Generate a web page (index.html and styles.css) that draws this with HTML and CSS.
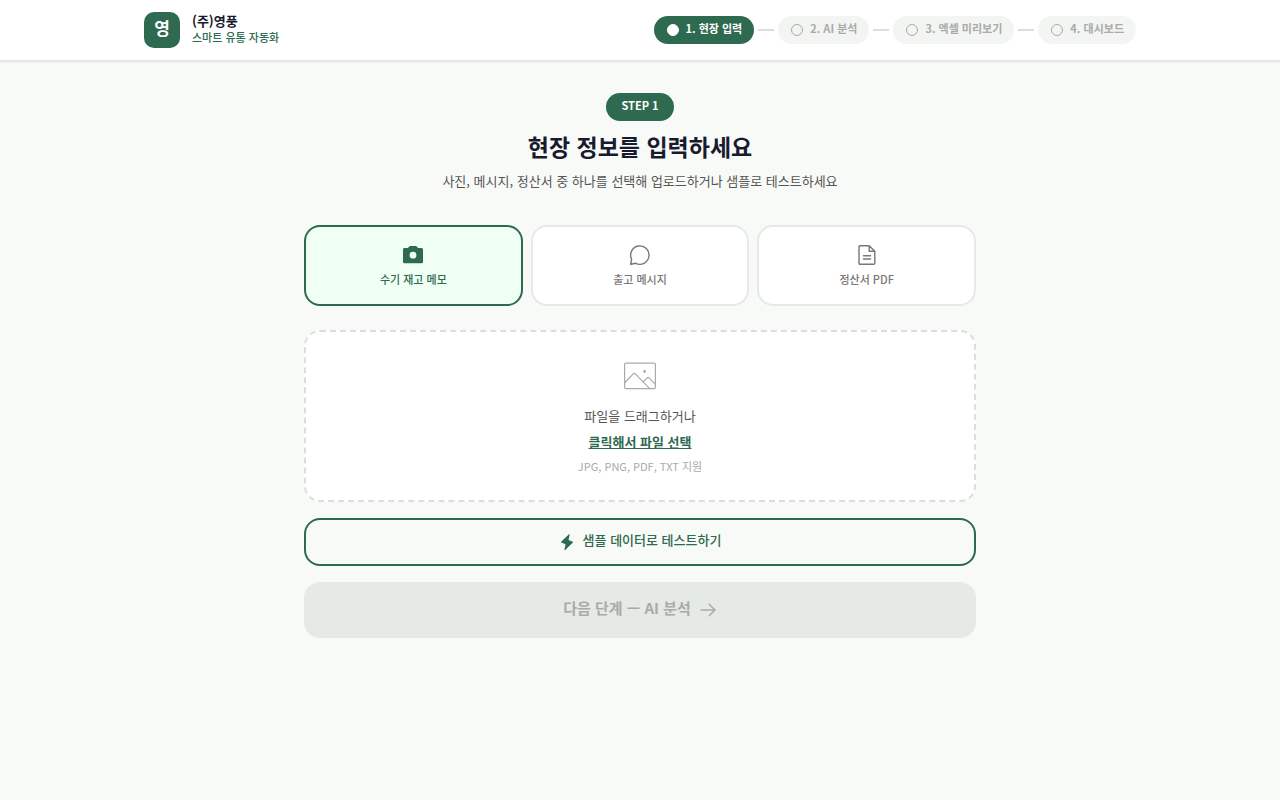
FILE: index.html
```html
<!DOCTYPE html>
<html lang="ko">
<head>
<meta charset="utf-8">
<meta name="viewport" content="width=device-width, initial-scale=1">
<title>(주)영풍 스마트 유통 자동화</title>
<link rel="stylesheet" href="styles.css">
</head>
<body>
<header class="header">
  <div class="header-inner">
    <div class="brand">
      <div class="logo">영</div>
      <div class="brand-text">
        <div class="brand-name">(주)영풍</div>
        <div class="brand-sub">스마트 유통 자동화</div>
      </div>
    </div>
    <ol class="steps">
      <li class="step active"><svg class="dot" viewBox="0 0 14 14" aria-hidden="true"><circle cx="7" cy="7" r="5.5" fill="currentColor"/></svg><span>1. 현장 입력</span></li>
      <li class="step"><svg class="dot" viewBox="0 0 14 14" aria-hidden="true"><circle cx="7" cy="7" r="5.5"/></svg><span>2. AI 분석</span></li>
      <li class="step"><svg class="dot" viewBox="0 0 14 14" aria-hidden="true"><circle cx="7" cy="7" r="5.5"/></svg><span>3. 엑셀 미리보기</span></li>
      <li class="step"><svg class="dot" viewBox="0 0 14 14" aria-hidden="true"><circle cx="7" cy="7" r="5.5"/></svg><span>4. 대시보드</span></li>
    </ol>
  </div>
</header>
<main class="main">
  <div class="intro">
    <span class="badge">STEP 1</span>
    <h1 class="title">현장 정보를 입력하세요</h1>
    <p class="desc">사진, 메시지, 정산서 중 하나를 선택해 업로드하거나 샘플로 테스트하세요</p>
  </div>
  <div class="types">
    <button type="button" class="type selected" aria-pressed="true">
      <svg class="type-icon" viewBox="0 0 22 22" aria-hidden="true"><path fill="currentColor" stroke="none" fill-rule="evenodd" d="M7.8 2h6.4l1.9 2h3.3c.9 0 1.6.7 1.6 1.6v12.1c0 .9-.7 1.6-1.6 1.6H2.6c-.9 0-1.6-.7-1.6-1.6V5.6C1 4.700 1.700 4 2.600 4h3.300zM11 7.800a3.400 3.400 0 1 0 0 6.800 3.400 3.400 0 0 0 0-6.800z"/></svg>
      <span>수기 재고 메모</span>
    </button>
    <button type="button" class="type" aria-pressed="false">
      <svg class="type-icon" viewBox="0 0 22 22" aria-hidden="true"><path d="M2.6 15.2A9.2 9.2 0 1 1 6.7 19.3L1.7 20.3z"/></svg>
      <span>출고 메시지</span>
    </button>
    <button type="button" class="type" aria-pressed="false">
      <svg class="type-icon" viewBox="0 0 22 22" aria-hidden="true"><path d="M4 1.700h9.200l5.600 5.600v12a1 1 0 0 1-1 1H4a1 1 0 0 1-1-1V2.700a1 1 0 0 1 1-1zM13.200 1.700v5.600h5.600M7.500 11.700h7M7.500 15h7"/></svg>
      <span>정산서 PDF</span>
    </button>
  </div>
  <div class="drop">
    <svg class="drop-icon" viewBox="0 0 36 36" aria-hidden="true"><rect x="2.6" y="5.2" width="30.8" height="25.4" rx="1.4"/><path d="M3 24.500l8.500-8.800c.5-.5 1.100-.5 1.600 0L27.700 30.600M21.300 23.700l3.900-3.800c.5-.5 1.200-.5 1.700 0l6.300 6.300"/><circle cx="22.600" cy="13.500" r=".8" fill="currentColor"/></svg>
    <p class="drop-text">파일을 드래그하거나</p>
    <button type="button" class="pick">클릭해서 파일 선택</button>
    <p class="formats">JPG, PNG, PDF, TXT 지원</p>
  </div>
  <button type="button" class="sample">
    <svg class="sample-icon" viewBox="0 0 18 18" aria-hidden="true"><path fill="currentColor" stroke="none" d="M12 .7 10.700 6.800l4.800 1.800c.4.200.5.600.2.900l-8.800 8.400c-.4.400-.9.100-.8-.4l1.300-6.100-4.800-1.800c-.4-.2-.5-.6-.2-.9L11.200.300c.4-.3.900 0 .8.400z"/></svg>
    <span>샘플 데이터로 테스트하기</span>
  </button>
  <button type="button" class="next" disabled>
    <span>다음 단계 — AI 분석</span>
    <svg class="next-icon" viewBox="0 0 18 18" aria-hidden="true"><path d="M2 9h14M10.200 3.200 16 9l-5.800 5.800"/></svg>
  </button>
</main>
</body>
</html>
```
FILE: styles.css
```css
* { box-sizing: border-box; }
body {
  margin: 0;
  min-height: 100vh;
  background: #f8faf8;
  color: #1a1a2e;
  font-family: "Noto Sans CJK KR", "Noto Sans", sans-serif;
}
button { font: inherit; cursor: pointer; }
h1, p, ol { margin: 0; padding: 0; }
svg {
  display: block;
  flex: none;
  fill: none;
  stroke: currentColor;
  stroke-linecap: round;
  stroke-linejoin: round;
}
.header {
  background: #fff;
  border-bottom: 1px solid #e5e8e5;
  box-shadow: 0 1px 2px rgba(0, 0, 0, 0.1);
}
.header-inner {
  display: flex;
  align-items: center;
  justify-content: space-between;
  max-width: 1024px;
  min-height: 60px;
  margin: 0 auto;
  padding: 0 16px;
}
.brand { display: flex; align-items: center; gap: 12px; }
.logo {
  width: 36px;
  height: 36px;
  border-radius: 10px;
  background: #2d6a4f;
  color: #fff;
  font-size: 17px;
  font-weight: 700;
  line-height: 32px;
  text-align: center;
}
.brand-text { padding-bottom: 2px; }
.brand-name { font-size: 13px; font-weight: 700; line-height: 16px; }
.brand-sub { color: #2d6a4f; font-size: 11px; font-weight: 500; line-height: 16px; }
.steps { display: flex; gap: 24px; list-style: none; }
.step {
  position: relative;
  display: flex;
  align-items: center;
  gap: 6px;
  padding: 4px 12px;
  border-radius: 14px;
  background: #f2f5f2;
  color: #aaa;
  font-size: 11px;
  font-weight: 700;
  line-height: 20px;
}
.step span { padding-bottom: 4px; line-height: 16px; }
.step.active { background: #2d6a4f; color: #fff; }
.step + .step::before {
  content: "";
  position: absolute;
  top: 13px;
  left: -20px;
  width: 16px;
  height: 2px;
  background: #ddd;
}
.dot { width: 14px; height: 14px; }
.main { max-width: 704px; margin: 0 auto; padding: 32px 16px; }
.intro { text-align: center; }
.badge {
  display: inline-block;
  padding: 2px 15px 6px;
  border-radius: 14px;
  background: #2d6a4f;
  color: #fff;
  font-size: 11px;
  font-weight: 700;
  line-height: 20px;
  vertical-align: top;
}
.title { margin-top: 7px; font-size: 23px; font-weight: 700; line-height: 36px; }
.desc { margin-top: 7px; color: #555; font-size: 13px; line-height: 20px; }
.types { display: grid; grid-template-columns: repeat(3, 1fr); gap: 8px; margin-top: 34px; }
.type {
  display: flex;
  flex-direction: column;
  align-items: center;
  gap: 5px;
  padding: 17px 8px 16px;
  border: 2px solid #e5eae5;
  border-radius: 16px;
  background: #fff;
  color: #777;
  font-size: 11px;
  font-weight: 500;
  line-height: 17px;
}
.type.selected { border-color: #2d6a4f; background: #f0fff4; color: #2d6a4f; }
.type-icon { width: 22px; height: 22px; stroke-width: 1.4; }
.drop {
  display: flex;
  flex-direction: column;
  align-items: center;
  margin-top: 24px;
  padding: 26px 16px 24px;
  border: 2px dashed #ddd;
  border-radius: 16px;
  background: #fff;
  text-align: center;
}
.drop-icon { width: 36px; height: 36px; color: #aaa; stroke-width: 1.2; }
.drop-text { margin-top: 12px; color: #555; font-size: 13px; line-height: 20px; }
.pick {
  margin-top: 6px;
  padding: 0;
  border: 0;
  background: none;
  color: #2d6a4f;
  font-size: 13px;
  font-weight: 700;
  line-height: 20px;
  text-decoration: underline;
}
.formats { margin-top: 4px; color: #aaa; font-size: 11px; line-height: 20px; }
.sample, .next {
  display: flex;
  align-items: center;
  justify-content: center;
  width: 100%;
  margin-top: 16px;
  border-radius: 16px;
  gap: 8px;
}
.sample {
  padding: 10px 16px;
  border: 2px solid #2d6a4f;
  background: transparent;
  color: #2d6a4f;
  font-size: 13px;
  font-weight: 500;
  line-height: 20px;
}
.sample span, .next span { padding-bottom: 4px; }
.sample-icon { width: 16px; height: 16px; }
.next {
  padding: 16px;
  border: 0;
  background: #e5eae5;
  color: #aaa;
  font-size: 15px;
  font-weight: 700;
  line-height: 20px;
  cursor: not-allowed;
}
.next-icon { width: 18px; height: 18px; stroke-width: 1.4; }
```
